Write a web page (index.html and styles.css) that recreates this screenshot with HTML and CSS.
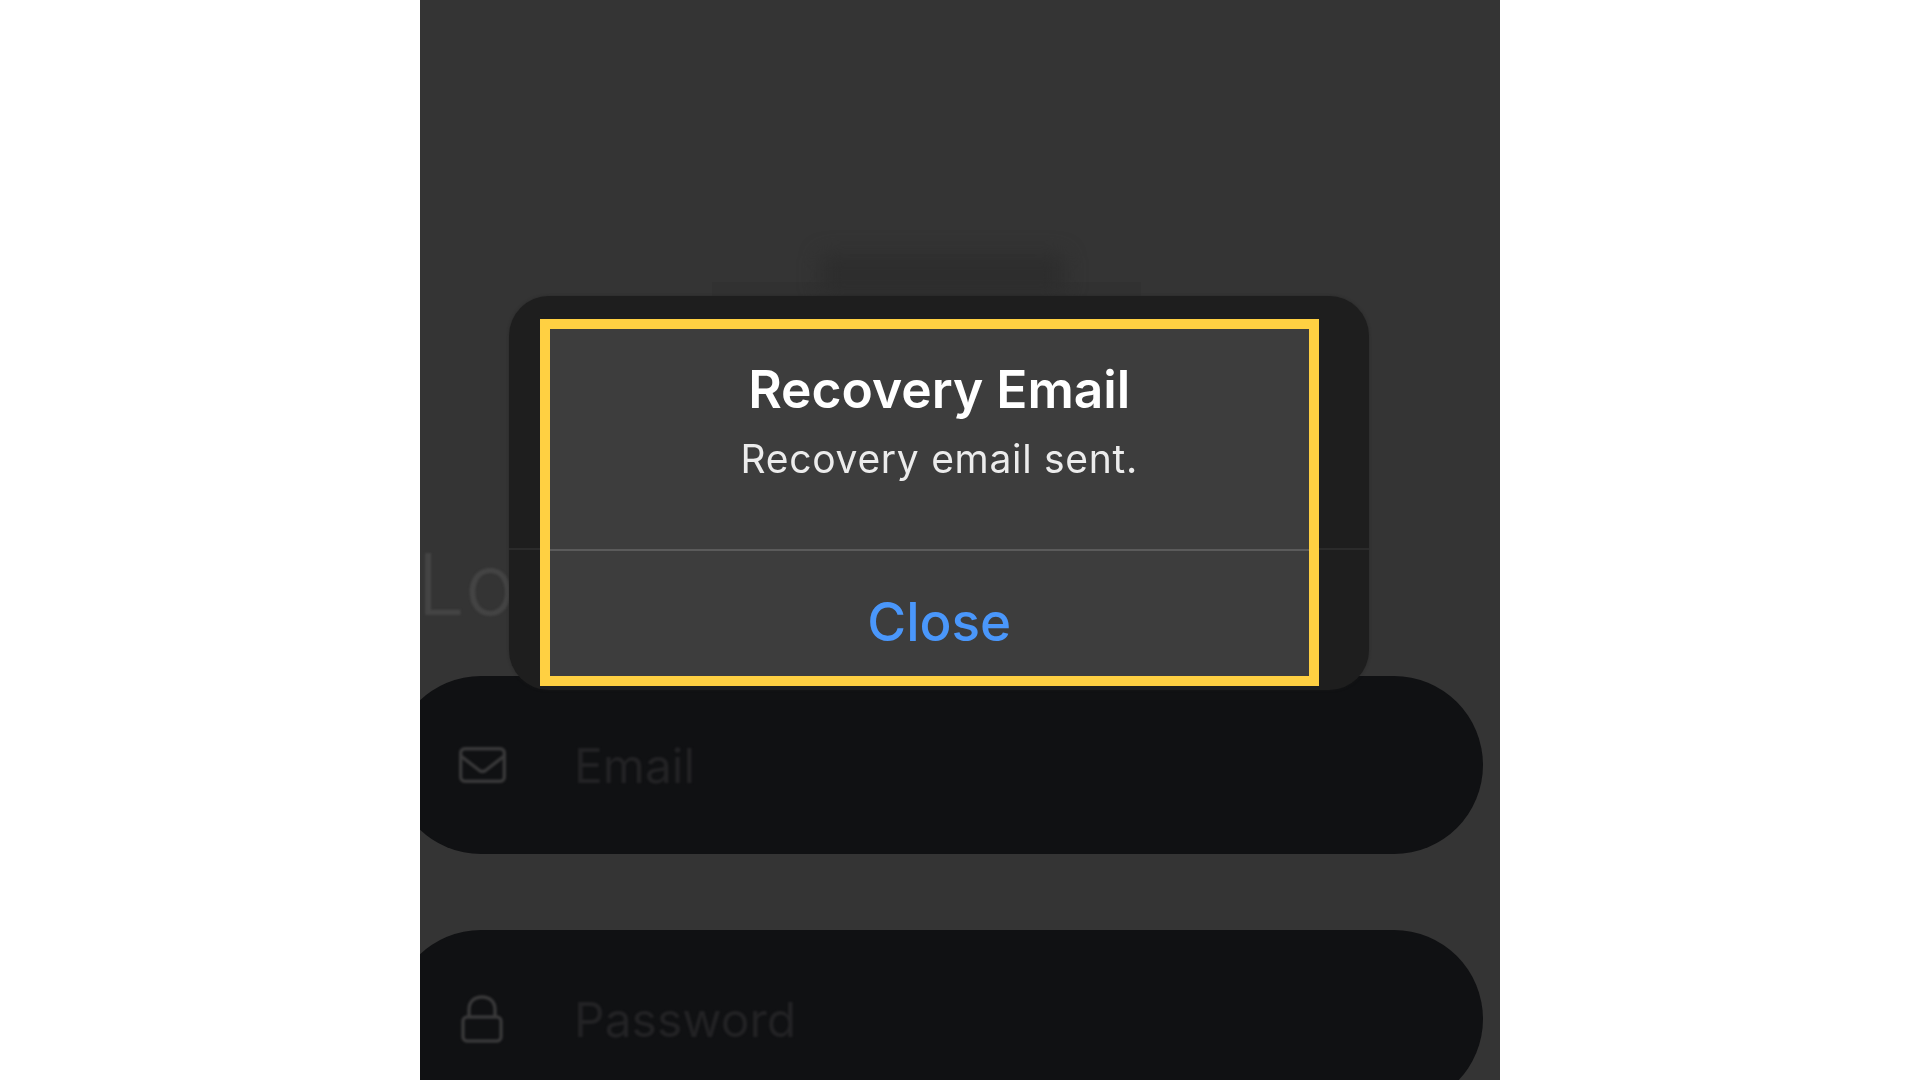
FILE: index.html
```html
<!DOCTYPE html>
<html lang="en">
<head>
<meta charset="utf-8">
<title>Recovery Email</title>
<link rel="stylesheet" href="styles.css">
</head>
<body>
<main class="phone">
  <header class="hero">
    <div class="hero-blur"></div>
    <div class="hero-bar"></div>
  </header>
  <h1 class="login-title">Login</h1>
  <form class="fields">
    <div class="field">
      <svg class="field-icon" width="47" height="36" viewBox="0 0 47 36" fill="none" stroke="#39393a" stroke-width="3.4" stroke-linejoin="round" stroke-linecap="round">
        <rect x="1.7" y="1.7" width="43.6" height="32.6" rx="4"/>
        <path d="M2.5 9.5 L20.5 23.5 Q23.5 25.5 26.5 23.5 L44.5 9.5"/>
      </svg>
      <span class="field-label">Email</span>
    </div>
    <div class="field">
      <svg class="field-icon" width="47" height="48" viewBox="0 0 47 48" fill="none" stroke="#39393a" stroke-width="3.4" stroke-linejoin="round">
        <rect x="4" y="22" width="38" height="24" rx="4"/>
        <path d="M10 22 V14.500 C10 6.500 15.500 2 23 2 C30.500 2 36 6.500 36 14.500 V22"/>
      </svg>
      <span class="field-label">Password</span>
    </div>
  </form>
  <section class="dialog" role="alertdialog">
    <div class="highlight">
      <h2 class="dialog-title">Recovery Email</h2>
      <p class="dialog-message">Recovery email sent.</p>
      <hr class="dialog-divider">
      <button class="dialog-action" type="button">Close</button>
    </div>
  </section>
</main>
</body>
</html>
```

FILE: styles.css
```css
* {
  box-sizing: border-box;
}

html,
body {
  margin: 0;
  height: 100%;
  background: #fff;
}

body {
  display: flex;
  justify-content: center;
  font-family: Inter, "Liberation Sans", sans-serif;
}

.phone {
  position: relative;
  width: 1080px;
  height: 1080px;
  overflow: hidden;
  background: #343434;
}

.hero {
  height: 296px;
  display: flex;
  flex-direction: column;
  align-items: center;
  justify-content: flex-end;
}

.hero-blur {
  width: 245px;
  height: 42px;
  margin-bottom: -14px;
  margin-left: -36px;
  background: #2d2d2d;
  border-radius: 8px;
  filter: blur(10px);
}

.hero-bar {
  width: 429px;
  height: 14px;
  margin-left: -68px;
  background: rgba(30, 30, 30, 0.12);
}

.login-title {
  margin: 239px 0 0 -3px;
  height: 141px;
  font-size: 85px;
  line-height: 100px;
  font-weight: 300;
  color: #444;
  white-space: nowrap;
  filter: blur(0.8px);
}

.fields {
  display: flex;
  flex-direction: column;
  gap: 76px;
  margin-left: -28px;
  width: 1091px;
}

.field {
  flex: none;
  height: 178px;
  display: flex;
  align-items: center;
  padding-left: 67px;
  background: #101113;
  border-radius: 89px;
}

.field-icon {
  flex: none;
  filter: blur(0.8px);
}

.field-label {
  position: absolute;
  left: 154px;
  font-size: 48px;
  font-weight: 400;
  color: #232325;
  filter: blur(0.8px);
}

.dialog {
  position: absolute;
  left: 89px;
  top: 296px;
  width: 860px;
  height: 394px;
  padding: 22.5px 0 0 30.5px;
  background: #1e1e1e;
  border-radius: 40px;
  box-shadow: 0 0 3px rgba(30, 30, 30, 0.5);
}

.dialog::before {
  content: "";
  position: absolute;
  left: 0;
  right: 0;
  top: 252px;
  height: 2px;
  background: #2b2b2b;
}

.highlight {
  position: relative;
  width: 779.5px;
  height: 367.5px;
  display: flex;
  flex-direction: column;
  border: 10px solid #ffd042;
  background: #3d3d3d;
}

.dialog-title,
.dialog-message,
.dialog-action {
  padding: 0 0 0 20px;
  text-align: center;
  filter: blur(0.6px);
}

.dialog-title {
  margin: 30.5px 0 0;
  font-size: 51.5px;
  line-height: 60px;
  font-weight: 560;
  color: #fff;
}

.dialog-message {
  margin: 17.5px 0 0;
  font-size: 39px;
  line-height: 44px;
  letter-spacing: 0.7px;
  font-weight: 400;
  color: #ececec;
}

.dialog-divider {
  width: 100%;
  height: 2px;
  margin: 68px 0 0;
  border: 0;
  background: #5b5b5b;
}

.dialog-action {
  margin: 41px 0 0;
  border: 0;
  background: none;
  font-family: inherit;
  font-size: 53px;
  line-height: 60px;
  font-weight: 500;
  color: #4a97fb;
}
```
